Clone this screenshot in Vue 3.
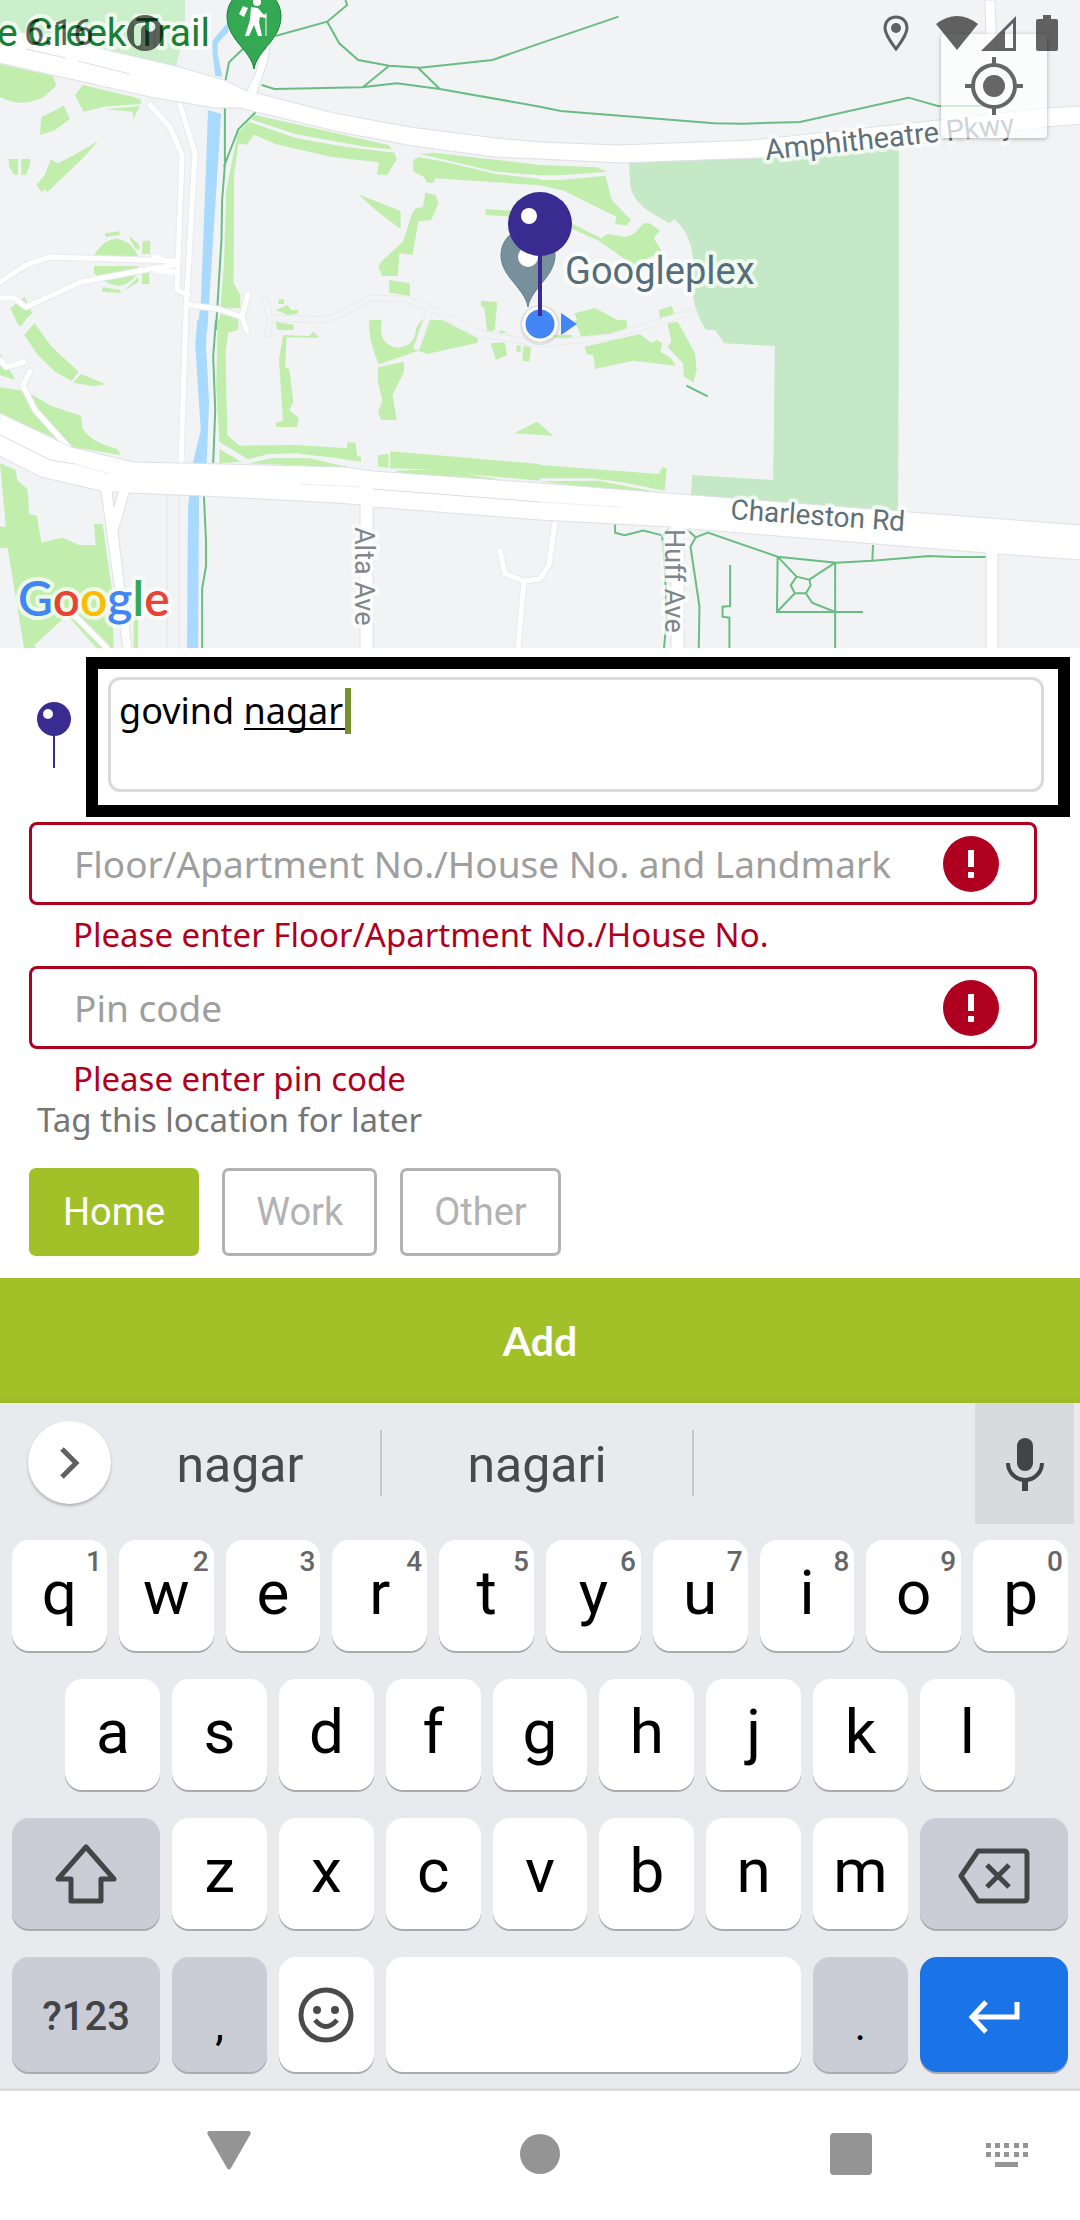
<script setup>
import { ref } from 'vue'

const address = ref('govind nagar')
const flat = ref('')
const pin = ref('')
const tags = ['Home', 'Work', 'Other']
const activeTag = ref('Home')

const topRow = [...'qwertyuiop'].map((letter, i) => ({ letter, hint: (i + 1) % 10 }))
const middleRow = [...'asdfghjkl']
const bottomRow = [...'zxcvbnm']
</script>

<template>
  <main class="screen">
    <section class="map" aria-label="Map">
      <svg class="map-art" viewBox="0 0 1080 648" preserveAspectRatio="xMidYMid slice">
        <rect width="1080" height="648" fill="#f1f3f5" />

        <!-- north-west quarter -->
        <g transform="scale(.3444 .3333)">
          <path fill="#cbeecb" d="M0 0H537V100L510 200L0 80Z" />
          <g class="water">
            <path d="M663 65L617 122V160L625 228L645 230L632 160V130L663 95Z" />
            <path d="M604 330L642 342L607 910L602 990H573L583 910L596 560Z" />
          </g>
          <g class="lawn">
            <path d="M0 192L155 228L163 258L125 292Q60 325 0 290Z" />
            <path d="M240 255L280 265L385 290L409 300V312L300 320L243 335L218 285Z" />
            <path d="M305 328L405 318L388 356L385 335Z" />
            <path d="M120 352L185 317L203 358L160 390L116 405Z" />
            <path d="M285 423L240 475L138 576L130 568L120 575L106 555L130 525L147 478L168 490L215 465Z" />
            <path d="M25 477H52V524H40L26 500ZM62 477H87V495L75 524H62Z" />
            <path d="M273 765Q300 718 340 716Q385 725 401 770L273 765ZM273 798H401V820Q370 860 340 857Q300 850 273 820Z" />
            <path d="M305 700L347 694V705L306 711ZM415 722H436V762H412ZM378 710L405 735V748H395L378 720ZM412 818H433V852H412ZM298 862L350 870V879L296 875ZM360 873L402 830V845Z" />
            <path d="M30 925L72 890L93 940L55 978Z" />
            <path d="M740 345L1128 435L1138 448L1060 440L860 403L728 358Z" />
            <path d="M722 365L860 415L1000 440L1145 458L1152 478L1125 524H1095L1100 487L960 470L800 432L737 404L715 435L693 430L680 520L678 850L698 885V925H640L650 800L657 570L690 400Z" />
            <path d="M1220 462L1260 458L1568 495V526L1440 515Z" />
            <path d="M1200 480L1215 472L1280 483L1440 522L1568 537V556L1265 535L1258 548H1240L1230 530L1200 515Z" />
            <path d="M1040 583L1163 633V686L1100 638Z" />
            <path d="M1235 578L1265 585L1273 610L1252 660L1215 664L1198 765L1160 760L1155 828H1110L1098 800L1107 785L1170 725L1197 640L1205 627L1228 620Z" />
            <path d="M1130 840L1190 850V888L1130 878Z" />
            <path d="M1410 628L1568 636V655L1410 645Z" />
            <path d="M640 942L690 955V990H632Z" />
            <path d="M1397 902L1443 906V916L1436 990H1415L1405 920H1397Z" />
            <path d="M808 898H825V912H808ZM800 930L835 915L845 930H868L862 942L835 945ZM800 965L852 975V990H805Z" />
          </g>
          <g class="trail">
            <path d="M800 108L950 65L1008 15L1003 0M950 65L985 130L1040 180L1130 197L1220 203L1430 180L1568 130L1796 50" />
            <path d="M760 255L797 267L1050 262L1152 250L1277 267L1568 320L1628 333L2073 370L2158 371L2323 366L2638 293L2723 318H2860M1130 197L1055 260M1215 205L1277 267" />
            <path d="M705 147L665 187L655 240M653 323V495L645 600L643 720L627 990M742 337L692 388L650 500" />
          </g>
        </g>

        <!-- north-east quarter -->
        <g transform="translate(540) scale(.3444 .3333)">
          <path class="park" d="M258 490L1042 440V990H482Q440 920 443 860Q460 720 390 657L376 670L310 630Q262 590 262 550Z" />
          <g class="lawn">
            <path d="M0 495L165 502L195 515L60 526H0Z" />
            <path d="M0 540H60L190 527L208 600L264 660L250 676L218 672L222 650L70 572L0 556Z" />
            <path d="M80 665L95 672L178 715L170 722L80 680Z" />
            <path d="M195 702L250 712L275 700L300 670L318 670L348 692L330 715L355 755L270 795L170 722Z" />
            <path d="M100 940L160 924L235 966L250 960V990H120Z" />
            <path d="M345 930L382 918L390 945L348 955ZM370 978L398 965L410 990H378Z" />
          </g>
        </g>

        <!-- south-west quarter -->
        <g transform="translate(0 320) scale(.3444 .3333)">
          <g class="water">
            <path d="M573 0H602L598 75L607 245L600 430H560L583 330L567 75Z" />
            <path d="M550 527H578L575 984H543L546 560Z" />
          </g>
          <g class="lawn">
            <path d="M45 0H75L60 20ZM100 10L150 80L228 155L208 183L160 155L110 105L70 45ZM235 162L308 193L270 198L212 188Z" />
            <path d="M0 100L45 180L0 165ZM0 202L55 210L85 220L150 258L235 287L240 325Q260 365 340 387L352 405L205 380L150 350L0 285Z" />
            <path d="M0 430L45 450L50 480L80 508L85 583L107 587L120 668L180 653L230 675H278L273 612H298L325 810L330 984H70L22 683H0V620H17Z" />
            <path d="M388 800H401V984H388Z" />
            <path d="M632 0H692V30L662 38L655 100L660 345L695 377L860 375L1008 385V367L1032 368L1037 408L1048 410V425L980 415L860 400L780 402L720 418L637 365L628 200Z" />
            <path d="M637 387L700 425L637 430ZM720 430L790 415L900 415L1018 443Z" />
            <path d="M822 45L898 48L910 35L927 53L832 52L828 142L840 148L852 245L840 270L868 295L862 321H801V308L822 302L810 120Z" />
            <path d="M803 10L852 14L850 28L815 30Z" />
            <path d="M1098 142L1173 125V155L1140 225L1152 300H1108L1098 280L1110 240L1098 190Z" />
            <path d="M1072 0H1108Q1095 75 1155 83Q1205 80 1208 25L1225 0H1285L1387 55V68L1240 102L1215 92L1100 133Q1068 60 1072 0Z" />
            <path d="M1098 405L1128 402V443L1098 440ZM1133 394L1568 432V482L1330 460L1240 448L1133 445ZM1150 452L1270 448L1460 480L1160 460Z" />
            <path d="M1425 70L1465 67L1473 105L1440 120ZM1500 76H1512V95H1500ZM1520 78L1542 82L1537 125L1516 122ZM1410 0H1436V30L1415 35ZM1450 30L1475 38L1452 40Z" />
            <path d="M1493 340L1560 305L1606 347Z" />
          </g>
          <path fill="#f1f3f5" d="M100 975L195 885L280 984H105Z" />
          <path class="trail" d="M627 0L619 110L625 270L619 430M592 527L598 660V740L587 805V984" />
        </g>

        <!-- south-east quarter -->
        <g transform="translate(540 320) scale(.3444 .3333)">
          <path class="park" d="M465 0H1042L1040 575L438 525L442 465L677 480L682 78L535 70L508 30L482 28Z" />
          <g class="lawn">
            <path d="M100 0H250L255 20L205 42L120 50ZM40 45H92V54H40Z" />
            <path d="M130 80L290 42L322 68L340 60L355 70L350 95L380 115L395 137L270 122L160 147L155 105L135 102Z" />
            <path d="M370 10L400 5L450 100L455 150L445 187L418 170L415 130L370 80L382 65Z" />
            <path d="M0 435L345 462L355 442L368 445L362 512L240 487L150 475H0ZM0 484L170 482L350 518L200 510Z" />
          </g>
          <g class="trail">
            <path d="M425 197L487 229M218 613V638L245 646L300 632L358 647M375 622L355 650L365 800L368 900L360 984M425 627L452 652L487 638L690 710L860 728L965 722L1130 708L1200 711H1295M967 675L965 722M452 652L437 680L463 860L461 984" />
            <path d="M552 735V858L530 860V890L550 893V984M690 710L688 876H938M857 728V984M690 710L745 770L782 779L857 728M745 770L728 796L740 820L688 876M740 820H772L786 796L782 779M772 820L790 848L857 876" />
          </g>
        </g>

        <!-- streets -->
        <g class="street-edge">
          <path d="M0 282L28 264L50 257L176 261M0 298L14 298L26 307L81 282L160 267M150 105L170 127L182 155L177 290L188 295" />
          <path d="M180 105L195 153L186 310L181 463M190 305L218 309L242 317L247 331M242 317L248 294" />
          <path d="M0 360L6 367L24 362M30 371L23 386L35 410L70 449M75 616L107 648M500 551L505 574L524 581L540 579L549 565L555 522M524 581L518 648" />
          <path class="faint" d="M265 299L270 318L268 334M270 318L322 320L340 315L370 298L406 299L430 308L478 333L540 344L610 337L691 312M430 310L417 347" />
        </g>
        <g class="street">
          <path d="M0 282L28 264L50 257L176 261M0 298L14 298L26 307L81 282L160 267M150 105L170 127L182 155L177 290L188 295M155 257L175 264L155 270L175 272" />
          <path d="M180 105L195 153L186 310L181 463M190 305L218 309L242 317L247 331M242 317L248 294" />
          <path d="M0 360L6 367L24 362M30 371L23 386L35 410L70 449M75 616L107 648M500 551L505 574L524 581L540 579L549 565L555 522M524 581L518 648" />
          <path class="faint" d="M265 299L270 318L268 334M270 318L322 320L340 315L370 298L406 299L430 308L478 333L540 344L610 337L691 312M430 310L417 347" />
        </g>
        <path fill="none" stroke="#e2e3e8" d="M167 490V648M179 490V648" />
        <g class="road">
          <path d="M0 28L103 49L176 66L224 80L247 91L256 72L262 40H271L268 60L257 93L334 113L410 127L496 138L540 142L619 145L753 140L939 120L988 115L985 0H995L999 113L1046 108L1081 106V124L1046 127L900 145L760 158L619 163L540 159L494 157L413 146L339 132L240 108H215L155 98L-1 63Z" />
          <path d="M0 413L71 447L134 462L182 463L344 467L373 471L540 483L667 493L884 510L1081 525V560L998 554V649H986V553L691 529L684 528V649H671V527L540 520L373 507V649H360V505L337 503L203 496L129 493L118 532L132 649H123L101 491L41 477L-1 456Z" />
        </g>
        <path fill="#f1f3f5" stroke="#dfe0e6" d="M112 492H118L114 507Z" />
        <path fill="none" stroke="#dcdde3" d="M26 49L66 58M78 61L130 74M0 435L50 460L75 464M373 489L540 502" />
        <path fill="none" stroke="#f0f0f3" d="M75 464L110 474M300 484L360 487M540 502L620 507" />

        <!-- labels -->
        <g class="label">
          <text x="210" y="46" font-size="39" text-anchor="end" fill="#188038">te Creek Trail</text>
          <text x="565" y="284" font-size="38" fill="#546e7a">Googleplex</text>
          <text transform="translate(766 160) rotate(-6)" font-size="29" fill="#5f7078">Amphitheatre Pkwy</text>
          <text transform="translate(730 519) rotate(4)" font-size="28" fill="#5f7078">Charleston Rd</text>
          <text transform="translate(355 527) rotate(90)" font-size="27" fill="#80868b">Alta Ave</text>
          <text transform="translate(665 529) rotate(90)" font-size="27" fill="#80868b">Huff Ave</text>
          <text class="brand" x="18" y="616" font-size="48"><tspan fill="#4285f4">G</tspan><tspan fill="#ea4335">o</tspan><tspan fill="#fbbc05">o</tspan><tspan fill="#4285f4">g</tspan><tspan fill="#34a853">l</tspan><tspan fill="#ea4335">e</tspan></text>
        </g>

        <!-- trailhead marker -->
        <path fill="#34a853" stroke="#188038" d="M254 69C251 50 227 40 227 16A27 27 0 0 1 281 16C281 40 257 50 254 69Z" />
        <g fill="#fff">
          <circle cx="257" cy="2" r="4" />
          <path d="M243 6L248 8L244 17L239 14ZM251 7L258 8L263 14L266 15V18L260 17L259 22L262 36H258L254 25L249 36H245L250 20Z" />
        </g>
        <path d="M266 13V36" stroke="#fff" />

        <!-- place marker, current position and picker pin -->
        <path fill="#78909c" stroke="#607d8b" d="M528 307C525 288 501 277 501 255A27 27 0 0 1 555 255C555 277 531 288 528 307Z" />
        <circle cx="528" cy="257" r="10" fill="#fff" />
        <circle cx="540" cy="325" r="20" fill="#000" opacity=".08" />
        <circle cx="540" cy="324" r="16" fill="#4285f4" stroke="#fff" stroke-width="3" />
        <path fill="#4285f4" d="M561 313L577 324L561 335Z" />
        <circle cx="540" cy="224" r="32" fill="#392b90" />
        <path d="M540 250V316" stroke="#392b90" stroke-width="4" />
        <circle cx="529" cy="216" r="8" fill="#fff" />
      </svg>

      <button class="locate" aria-label="My location">
        <svg width="60" height="60" viewBox="0 0 60 60" fill="none" stroke="#666" stroke-width="4">
          <circle cx="30" cy="30" r="21" />
          <circle cx="30" cy="30" r="11" fill="#666" stroke="none" />
          <path d="M30 1V10M30 50V59M1 30H10M50 30H59" />
        </svg>
      </button>

      <header class="status">
        <span>6:16</span>
        <svg class="app-dot" width="36" height="36" viewBox="0 0 36 36">
          <path fill-rule="evenodd" d="M18 0A18 18 0 1 1 18 36A18 18 0 1 1 18 0ZM14 8Q7 8 7 14V24Q7 31 11 31Q14 31 14 26V16Q14 10 19 10V14A5 5 0 1 0 22 7Z" />
        </svg>
        <svg class="push" width="26" height="36" viewBox="0 0 26 36">
          <path d="M13 2C6 2 2 7 2 13C2 20 13 34 13 34C13 34 24 20 24 13C24 7 20 2 13 2Z" fill="none" stroke="#000" stroke-width="3" />
          <circle cx="13" cy="13" r="5" />
        </svg>
        <svg class="wifi" width="42" height="36" viewBox="0 0 42 36"><path d="M0 9Q21 -7 42 9L21 35Z" /></svg>
        <svg class="signal" width="36" height="36" viewBox="0 0 36 36"><path fill-rule="evenodd" d="M0 36L35 1V36ZM24 16V33H32V8Z" /></svg>
        <svg width="22" height="36" viewBox="0 0 22 36"><path d="M7 0H15V4H20Q22 4 22 6V34Q22 36 20 36H2Q0 36 0 34V6Q0 4 2 4H7Z" /></svg>
      </header>
    </section>

    <form class="form" @submit.prevent>
      <div class="address">
        <svg class="pin" width="36" height="70" viewBox="0 0 36 70">
          <path d="M18 30V67" stroke="#392b90" stroke-width="2" />
          <circle cx="18" cy="18" r="17" fill="#392b90" />
          <circle cx="12" cy="13" r="5" fill="#fff" />
        </svg>
        <div class="frame">
          <div class="box">
            <textarea v-model="address" aria-label="Address" rows="1" spellcheck="false"></textarea>
            <i class="composing"></i>
            <i class="caret"></i>
          </div>
        </div>
      </div>

      <div class="fields">
        <div class="group">
          <div class="field">
            <input v-model="flat" aria-label="Floor/Apartment No./House No. and Landmark" aria-describedby="flat-error" placeholder="Floor/Apartment No./House No. and Landmark" />
            <svg width="56" height="56" viewBox="0 0 56 56"><circle cx="28" cy="28" r="28" fill="#b00020" /><path d="M25 14H31V31H25ZM25 36H31V42H25Z" fill="#fff" /></svg>
          </div>
          <p id="flat-error">Please enter Floor/Apartment No./House No.</p>
        </div>
        <div class="group">
          <div class="field">
            <input v-model="pin" aria-label="Pin code" aria-describedby="pin-error" placeholder="Pin code" />
            <svg width="56" height="56" viewBox="0 0 56 56"><circle cx="28" cy="28" r="28" fill="#b00020" /><path d="M25 14H31V31H25ZM25 36H31V42H25Z" fill="#fff" /></svg>
          </div>
          <p id="pin-error">Please enter pin code</p>
        </div>
        <p class="hint">Tag this location for later</p>
        <div class="tags">
          <button v-for="tag in tags" :key="tag" type="button" :class="{ active: tag === activeTag }" @click="activeTag = tag">{{ tag }}</button>
        </div>
      </div>
      <button class="add">Add</button>
    </form>

    <section class="keyboard" aria-label="Keyboard">
      <div class="suggestions">
        <button class="more" aria-label="More">
          <svg width="30" height="36" viewBox="0 0 30 36" fill="none" stroke="#616161" stroke-width="5"><path d="M7 4L21 18L7 32" /></svg>
        </button>
        <button class="word">nagar</button>
        <button class="word">nagari</button>
        <span></span>
        <button class="mic" aria-label="Voice input">
          <svg width="40" height="54" viewBox="0 0 40 54" fill="none" stroke="#424446" stroke-width="4">
            <rect x="12" y="1" width="16" height="33" rx="8" fill="#424446" stroke="none" />
            <path d="M3 26A17 17 0 0 0 37 26" /><path d="M20 43V54" stroke-width="6" />
          </svg>
        </button>
      </div>
      <div class="keys">
        <button v-for="k in topRow" :key="k.letter" class="key">{{ k.letter }}<small>{{ k.hint }}</small></button>
        <button v-for="(k, i) in middleRow" :key="k" class="key" :class="{ inset: i === 0, last: i === 8 }">{{ k }}</button>
        <button class="key grey wide" aria-label="Shift">
          <svg width="64" height="64" viewBox="0 0 64 64" fill="none" stroke="#424446" stroke-width="5" stroke-linejoin="round"><path d="M32 5L4 37H17V59H47V37H60Z" /></svg>
        </button>
        <button v-for="k in bottomRow" :key="k" class="key">{{ k }}</button>
        <button class="key grey wide low" aria-label="Delete">
          <svg width="72" height="56" viewBox="0 0 72 56" fill="none" stroke="#424446" stroke-width="5" stroke-linejoin="round"><path d="M20 3H66Q69 3 69 6V50Q69 53 66 53H20L3 28Z" /><path d="M29 17L51 39M51 17L29 39" /></svg>
        </button>
        <button class="key grey wide low mode">?123</button>
        <button class="key grey mark">,</button>
        <button class="key emoji" aria-label="Emoji">
          <svg width="56" height="56" viewBox="0 0 56 56" fill="none" stroke="#4a4a4a" stroke-width="5"><circle cx="28" cy="28" r="25" /><g fill="#4a4a4a" stroke="none"><circle cx="19" cy="23" r="4" /><circle cx="37" cy="23" r="4" /></g><path d="M17 33Q28 46 39 33" /></svg>
        </button>
        <button class="key space" aria-label="Space"></button>
        <button class="key grey mark">.</button>
        <button class="key wide low enter" aria-label="Enter">
          <svg width="52" height="36" viewBox="0 0 52 36" fill="none" stroke="#fff" stroke-width="5"><path d="M49 3V18H5M18 3L4 18L18 33" /></svg>
        </button>
      </div>
    </section>

    <nav class="nav">
      <button aria-label="Back"><svg width="46" height="46" viewBox="0 0 46 46"><path d="M3 0H43Q46 1 44 4L25 37Q23 40 21 37L2 4Q0 1 3 0Z" /></svg></button>
      <button aria-label="Home screen"><svg width="42" height="42" viewBox="0 0 42 42"><circle cx="21" cy="21" r="20" /></svg></button>
      <button aria-label="Recent apps"><svg width="42" height="42" viewBox="0 0 42 42"><rect width="42" height="42" rx="4" /></svg></button>
      <button class="switch" aria-label="Switch keyboard">
        <svg width="42" height="24" viewBox="0 0 42 24"><path d="M0 0h5v5H0zM9 0h5v5H9zM18 0h5v5h-5zM28 0h5v5h-5zM37 0h5v5h-5zM0 9h5v5H0zM9 9h5v5H9zM18 9h5v5h-5zM28 9h5v5h-5zM37 9h5v5h-5zM9 19h23v5H9z" /></svg>
      </button>
    </nav>
  </main>
</template>

<style>
body { margin: 0; background: #fff; }
</style>

<style scoped>
.screen { font-family: "Noto Sans", sans-serif; color: #000; }
button { border: 0; padding: 0; margin: 0; background: none; font: inherit; color: inherit; }
svg { display: block; flex: none; }
p { margin: 0; }

.map { position: relative; aspect-ratio: 5 / 3; overflow: hidden; }
.map-art { width: 100%; height: 100%; }
.lawn { fill: #c1edad; }
.park { fill: #c5e9c6; }
.water { fill: #a8daff; }
.trail, .trail path { fill: none; stroke: #69bd82; stroke-width: 2; vector-effect: non-scaling-stroke; }
.street, .street-edge { fill: none; stroke-linejoin: round; stroke-linecap: round; }
.street { stroke: #fff; stroke-width: 5; }
.street-edge { stroke: #e9eaee; stroke-width: 7; }
.street .faint { stroke: #f1f3f5; }
.road { fill: #fff; stroke: #dfe0e6; }
.label { font-family: Roboto, sans-serif; stroke: #fff; stroke-opacity: .7; stroke-width: 8; stroke-linejoin: round; paint-order: stroke; }
.brand { font-family: Lato, sans-serif; font-weight: 600; }
.locate {
  position: absolute; top: 34px; right: 33px; width: 106px; height: 104px;
  display: grid; place-items: center; border-radius: 4px;
  background: rgba(255, 255, 255, .7); box-shadow: 0 1px 4px rgba(0, 0, 0, .3);
}
.status {
  position: absolute; inset: 0 0 auto; height: 66px; padding: 0 22px 0 24px;
  display: flex; align-items: center; opacity: .6; font: 36px/40px Roboto, sans-serif;
}
.app-dot { margin-left: 34px; }
.push { margin-left: auto; margin-right: 27px; }
.wifi { margin-right: 3px; }
.signal { margin-right: 19px; }

.address { display: flex; align-items: flex-start; gap: 14px; padding: 9px 10px 0 36px; }
.pin { margin-top: 44px; }
.frame { flex: 1; border: 12px solid #000; padding: 8px 14px 13px 10px; }
.box { position: relative; height: 109px; border: 3px solid #dadada; border-radius: 12px; }
.box textarea {
  display: block; box-sizing: border-box; width: 100%; height: 100%; padding: 9px 8px; border: 0; outline: 0;
  resize: none; overflow: hidden; background: none; font: 36px/44px "Noto Sans", sans-serif; color: #000;
}
.composing { position: absolute; left: 133px; top: 48px; width: 102px; height: 2px; background: #000; }
.caret { position: absolute; left: 234px; top: 8px; width: 6px; height: 46px; background: #778f2d; }

.fields { padding: 5px 43px 22px 29px; }
.field {
  box-sizing: border-box; height: 83px; display: flex; align-items: center; gap: 16px;
  padding: 0 35px 0 42px; border: 3px solid #b00020; border-radius: 8px;
}
.field input { flex: 1; min-width: 0; padding: 0; border: 0; outline: 0; background: none; font: 37px/48px "Noto Sans", sans-serif; }
.field input::placeholder { color: #9e9e9e; opacity: 1; }
.group { margin-bottom: 13px; }
.group p { padding: 12px 44px 0; font-size: 33px; line-height: 36px; color: #b00020; }
.group + .hint { margin-top: -12px; }
.hint { padding-left: 8px; font-size: 33px; line-height: 44px; color: #757575; }
.tags { display: flex; gap: 23px; margin-top: 26px; }
.tags button {
  height: 88px; padding: 0 31px; border: 3px solid #b1b2b4; border-radius: 7px;
  font: 38px/44px Roboto, sans-serif; color: #b1b2b4;
}
.tags .active { background: #a2c128; border-color: #a2c128; color: #fff; }
.add {
  display: block; width: 100%; height: 125px; font-family: Lato, sans-serif; font-weight: 700; font-size: 41px; color: #fff;
  background: linear-gradient(#a2c128 94%, #9bb926);
}

.keyboard { background: #e8eaee; border-bottom: 3px solid #dedede; font-family: Roboto, sans-serif; }
.suggestions {
  display: grid; height: 121px; padding-right: 6px;
  grid-template-columns: minmax(0, 100fr) minmax(0, 282fr) minmax(0, 312fr) minmax(0, 281fr) 99px;
}
.more {
  width: 83px; height: 83px; margin: 18px 0 0 28px; display: grid; place-items: center;
  border-radius: 50%; background: #fff; box-shadow: 0 2px 3px rgba(0, 0, 0, .25);
}
.word {
  align-self: start; height: 66px; margin-top: 27px; padding-top: 5px; border-right: 2px solid #c4c6ca;
  font-size: 50px; line-height: 61px; color: #47494b;
}
.mic { display: grid; place-items: center; background: #d9dade; }
.keys {
  display: grid; grid-template-columns: repeat(20, minmax(0, 1fr)); grid-template-rows: 111px 111px 111px 115px;
  gap: 28px 12px; padding: 16px 12px;
}
.key {
  position: relative; grid-column: span 2; display: flex; align-items: center; justify-content: center;
  padding-bottom: 6px; border-radius: 17px; background: #fff; box-shadow: 0 2px 0 #a9abae;
  font-size: 62px; line-height: 72px;
}
.key small { position: absolute; top: 6px; right: 5px; font-size: 28px; font-weight: 500; line-height: 32px; color: #666; }
.inset { grid-column: 2 / span 2; }
.last { grid-column: 18 / span 2; }
.wide { grid-column: span 3; padding-bottom: 0; }
.low { padding-top: 4px; }
.space { grid-column: span 8; }
.grey { background: #cbcdd6; }
.mode { font-size: 40px; font-weight: 500; color: #424446; }
.mark { padding: 20px 0 0; font-size: 44px; }
.emoji { padding: 0; }
.enter { background: #1b73e8; }

.nav { position: relative; display: grid; grid-template-columns: repeat(3, 1fr); height: 126px; padding: 0 73px 3px; fill: #949494; }
.nav button { display: grid; place-items: center; }
.nav .switch { position: absolute; right: 52px; top: 52px; }
</style>
